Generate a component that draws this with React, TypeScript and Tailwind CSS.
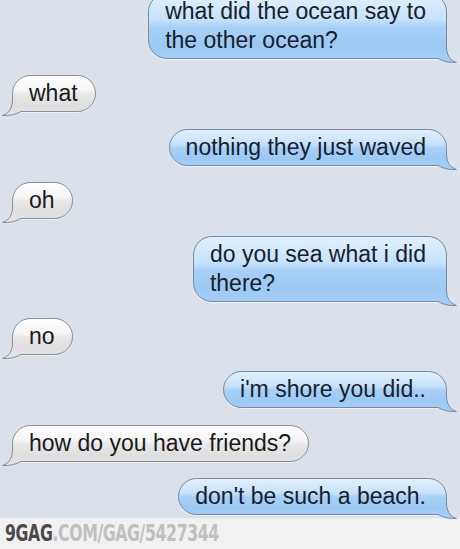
import type { ReactNode } from "react";

type Side = "me" | "them";

const messages: { side: Side; lines: string[] }[] = [
  { side: "me", lines: ["what did the ocean say to", "the other ocean?"] },
  { side: "them", lines: ["what"] },
  { side: "me", lines: ["nothing they just waved"] },
  { side: "them", lines: ["oh"] },
  { side: "me", lines: ["do you sea what i did", "there?"] },
  { side: "them", lines: ["no"] },
  { side: "me", lines: ["i'm shore you did.."] },
  { side: "them", lines: ["how do you have friends?"] },
  { side: "me", lines: ["don't be such a beach."] },
];

// the little curled tail at the bottom corner of each bubble
function Tail({ fill, stroke, flip }: { fill: string; stroke: string; flip?: boolean }) {
  return (
    <svg
      width="30"
      height="26"
      viewBox="0 0 30 26"
      className={flip ? "absolute left-[-12px] bottom-[-6px] -scale-x-100" : "absolute right-[-12px] bottom-[-6px]"}
    >
      <path
        d="M18.5,8 C18.5,16 21,22 28.5,24.5 C22,25 15,23.5 10,20.5 L10,19.4 L17.6,19.4 L17.6,8 Z"
        fill={fill}
      />
      <path
        d="M18.5,8 C18.5,16 21,22 28.5,24.5 C22,25 15,23.5 10,20.5"
        fill="none"
        stroke={stroke}
        strokeWidth="1"
      />
    </svg>
  );
}

function Bubble({ side, children }: { side: Side; children: ReactNode }) {
  if (side === "me") {
    return (
      <div className="self-end mr-[13px] relative rounded-[19px] rounded-br-none border border-[#7a8ca2] bg-[linear-gradient(180deg,#e2f0fd_0%,#c6e2fb_40%,#a6d0f7_52%,#9ccaf5_80%,#a2cdf6_100%)] pl-[16px] pr-[20px] py-[3px] shadow-[0_1px_0_rgba(255,255,255,0.55)]">
        <Tail fill="#a1ccf6" stroke="#7a8ca2" />
        <p className="relative whitespace-nowrap text-[23px] leading-[29px] text-[#18202c]">{children}</p>
      </div>
    );
  }
  return (
    <div className="self-start ml-[12px] relative rounded-[19px] rounded-bl-none border border-[#8c9199] bg-[linear-gradient(180deg,#ffffff_0%,#f6f6f6_40%,#e8e8e8_52%,#dfdfdf_85%,#e2e2e2_100%)] pl-[16px] pr-[17px] py-[3px] shadow-[0_1px_0_rgba(255,255,255,0.55)]">
      <Tail fill="#e1e1e1" stroke="#8c9199" flip />
      <p className="relative whitespace-nowrap text-[23px] leading-[29px] text-[#1a1a1a]">{children}</p>
    </div>
  );
}

export default function App() {
  return (
    <div className="w-[460px] h-[549px] overflow-hidden bg-[#dbe1eb] flex flex-col font-['Liberation_Sans',Arial,sans-serif]">
      <div className="flex-1 flex flex-col gap-[16.4px] mt-[-7px]">
        {messages.map((m, i) => (
          <Bubble key={i} side={m.side}>
            {m.lines.map((l, j) => (
              <span key={j} className="block">{l}</span>
            ))}
          </Bubble>
        ))}
      </div>

      <div className="h-[31px] shrink-0 bg-[#f1f1f1] pl-[5px] font-['DejaVu_Sans_Condensed','Liberation_Sans',sans-serif] font-bold text-[23px] leading-[31px] tracking-[-0.5px]">
        <span className="inline-block origin-left scale-x-[0.76] whitespace-nowrap">
          <span className="text-[#4a4a4a]">9GAG</span>
          <span className="text-[#c0c0c0]">.COM/GAG/5427344</span>
        </span>
      </div>
    </div>
  );
}
